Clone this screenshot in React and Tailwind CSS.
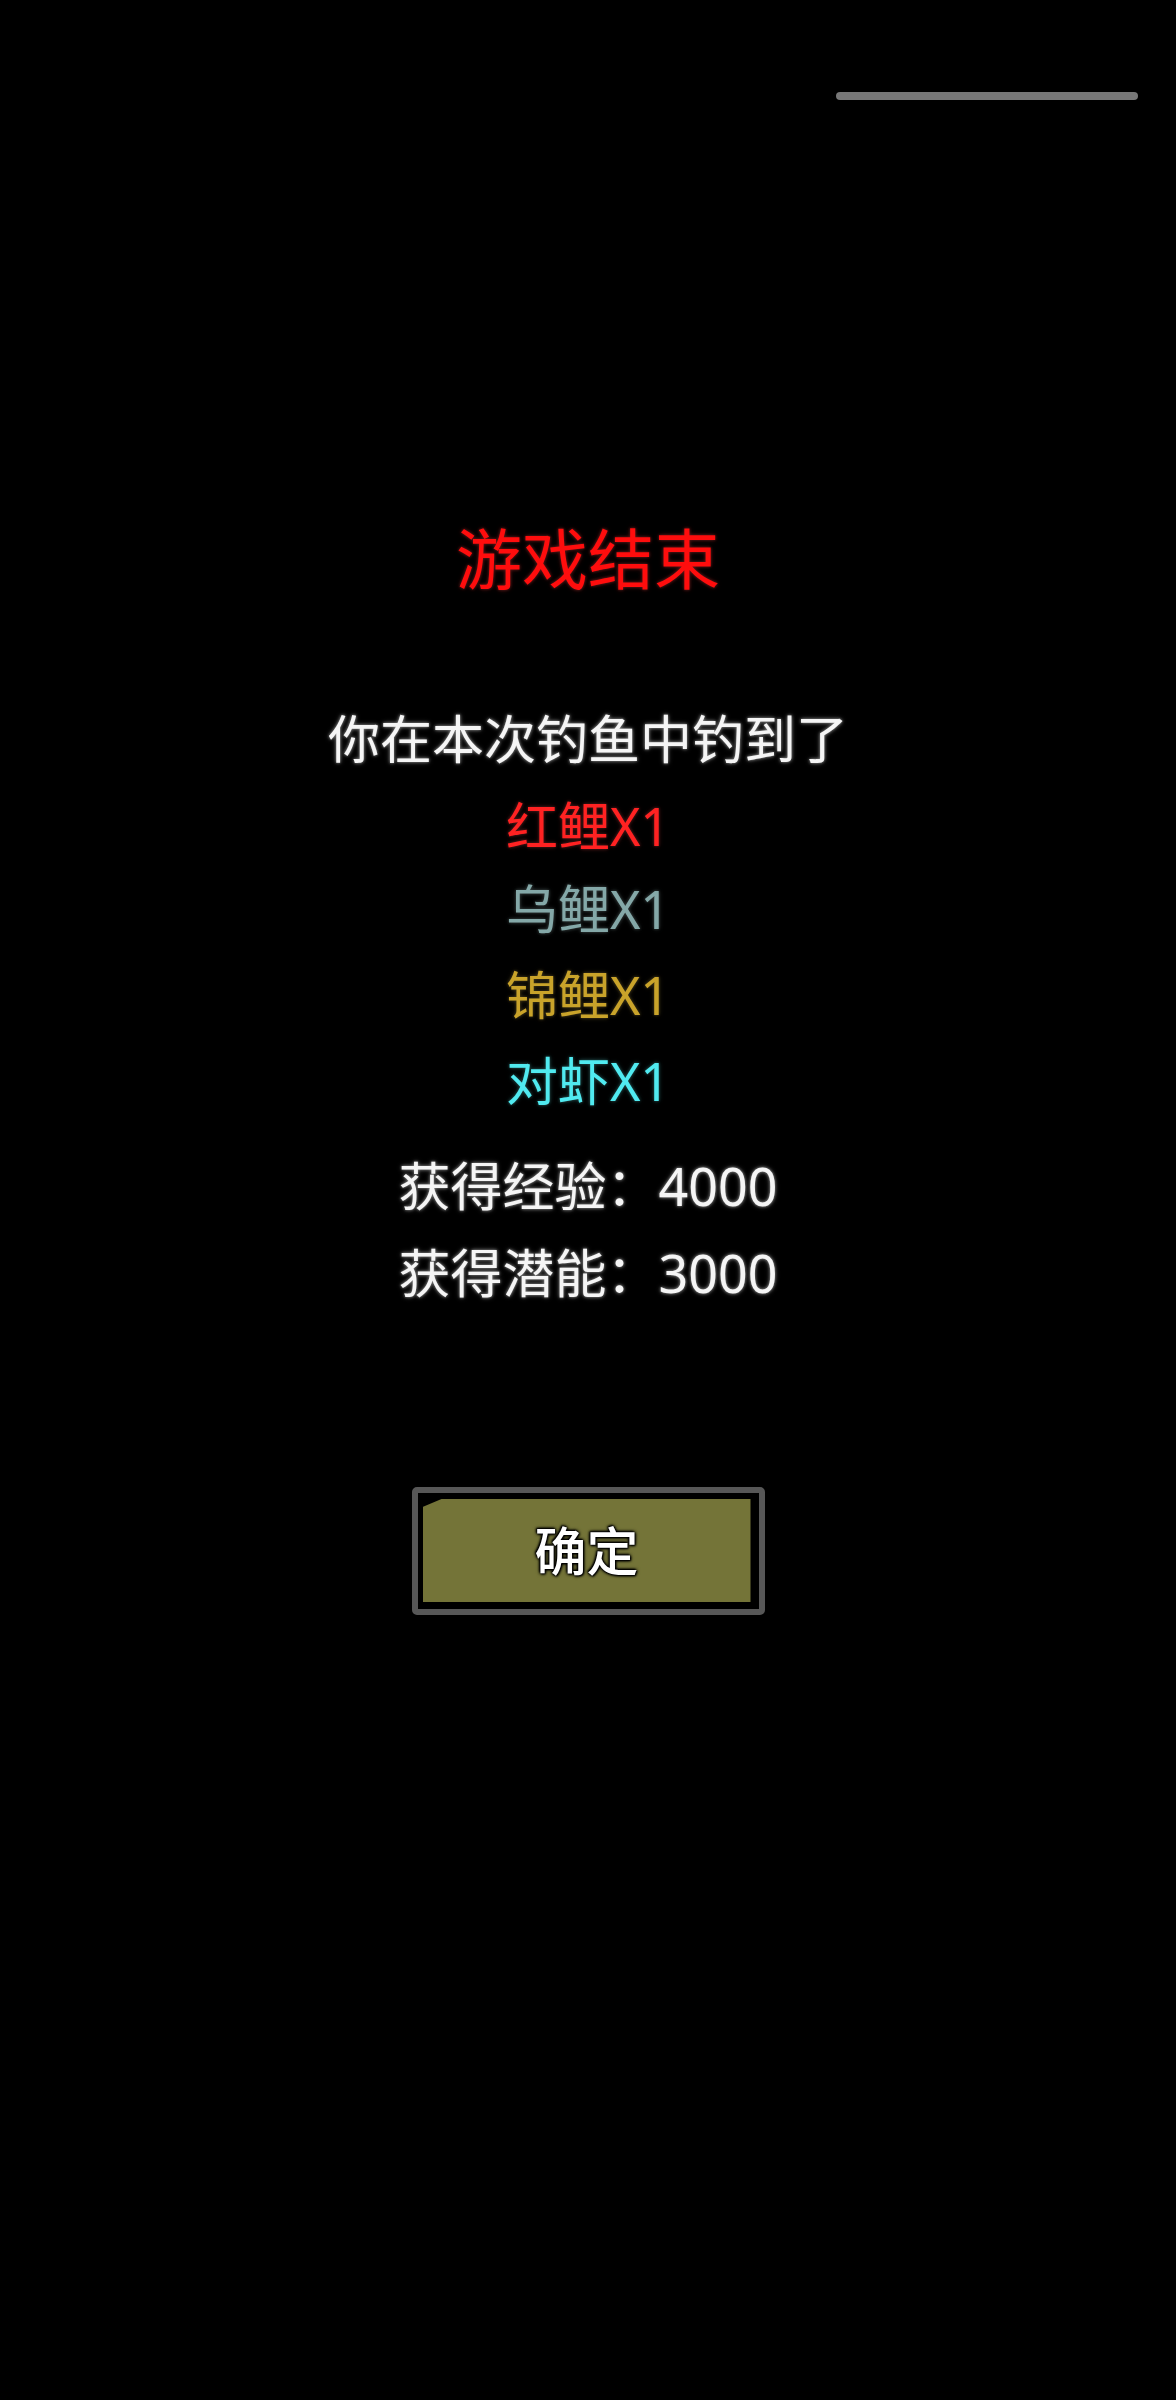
import React from "react";

const font = { fontFamily: '"Noto Sans", "Noto Sans CJK SC", sans-serif' };

export default function App() {
  return (
    <div
      className="min-h-[2400px] w-full bg-black"
      style={font}
    >
      <div className="flex justify-end pr-[38px] pt-[92px]">
        <div className="h-[8px] w-[302px] rounded-full bg-[#777777]" />
      </div>
      <div className="flex flex-col items-center pt-[425px]">
        <div className="h-[66px] text-[66px] leading-[66px] text-[#ff0d0d] [text-shadow:0_0_3px_rgba(110,30,30,0.9),0_0_5px_rgba(80,20,20,0.8)]">
          游戏结束
        </div>
        <div className="mt-[122px] h-[52px] text-[52px] leading-[52px] text-[#f5f5f5] [text-shadow:0_0_3px_rgba(150,150,150,0.9),0_0_5px_rgba(110,110,110,0.8)]">
          你在本次钓鱼中钓到了
        </div>
        <div className="mt-[35px] h-[52px] text-[52px] leading-[52px] text-[#ff2222] [text-shadow:0_0_3px_rgba(90,30,30,0.9),0_0_5px_rgba(70,25,25,0.8)]">
          红鲤X1
        </div>
        <div className="mt-[31px] h-[52px] text-[52px] leading-[52px] text-[#84a8a8] [text-shadow:0_0_3px_rgba(60,70,70,0.9),0_0_5px_rgba(50,60,60,0.8)]">
          乌鲤X1
        </div>
        <div className="mt-[34px] h-[52px] text-[52px] leading-[52px] text-[#c9a32a] [text-shadow:0_0_3px_rgba(75,65,30,0.9),0_0_5px_rgba(60,50,25,0.8)]">
          锦鲤X1
        </div>
        <div className="mt-[34px] h-[52px] text-[52px] leading-[52px] text-[#50eaf0] [text-shadow:0_0_3px_rgba(40,85,85,0.9),0_0_5px_rgba(30,70,70,0.8)]">
          对虾X1
        </div>
        <div className="mt-[53px] h-[52px] text-[52px] leading-[52px] text-[#f5f5f5] [text-shadow:0_0_3px_rgba(150,150,150,0.9),0_0_5px_rgba(110,110,110,0.8)]">
          获得经验：4000
        </div>
        <div className="mt-[35px] h-[52px] text-[52px] leading-[52px] text-[#f5f5f5] [text-shadow:0_0_3px_rgba(150,150,150,0.9),0_0_5px_rgba(110,110,110,0.8)]">
          获得潜能：3000
        </div>
        <div className="mt-[188px] box-border h-[128px] w-[353px] rounded-[5px] border-[6px] border-[#575757] bg-black pb-[7px] pl-[5px] pr-[8px] pt-[6px]">
          <div className="flex h-full w-full items-center justify-center bg-[#747438] [clip-path:polygon(0_8px,19px_0,100%_0,100%_100%,0_100%)]">
            <span className="text-[52px] font-medium leading-[52px] text-white [text-shadow:0_0_2px_#000,0_0_3px_#000,0_0_4px_#000,1px_1px_2px_#000,-1px_-1px_2px_#000]">
              确定
            </span>
          </div>
        </div>
      </div>
    </div>
  );
}
